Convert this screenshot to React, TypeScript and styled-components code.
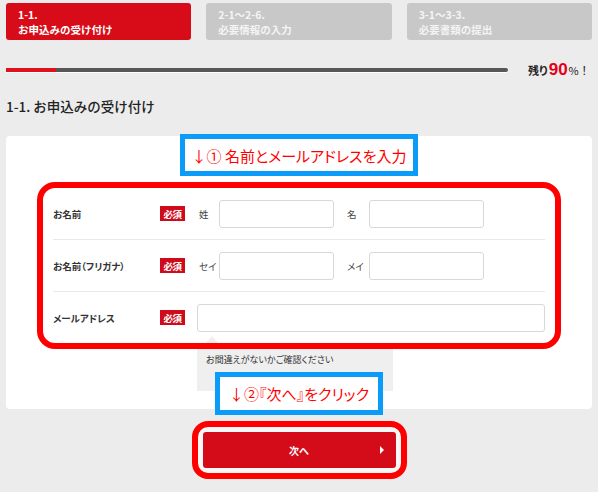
import React from 'react';
import styled, { createGlobalStyle } from 'styled-components';

const GlobalStyle = createGlobalStyle`
  html, body {
    margin: 0;
    padding: 0;
  }
  body {
    background: #ececec;
    font-family: 'Noto Sans CJK JP', 'Noto Sans', sans-serif;
    color: #333;
    width: 598px;
    height: 492px;
    overflow: hidden;
  }
`;

const Page = styled.div`
  padding: 3px 6px 0;
`;

const Steps = styled.div`
  display: grid;
  grid-template-columns: repeat(3, 1fr);
  gap: 15px;
`;

const Step = styled.div<{ active?: boolean }>`
  height: 37px;
  box-sizing: border-box;
  padding: 4px 12px 0;
  border-radius: 3px;
  background: ${({ active }) => (active ? '#d80c18' : '#c8c8c8')};
  color: ${({ active }) => (active ? '#fff' : '#f4f4f4')};
  font-size: 10.5px;
  font-weight: bold;
  line-height: 15px;
  white-space: nowrap;
`;

const ProgressRow = styled.div`
  display: flex;
  align-items: center;
  height: 20px;
  margin-top: 20px;
`;

const Track = styled.div`
  width: 502px;
  height: 4px;
  background: #575757;
  border-radius: 0 2px 2px 0;
  box-shadow: 0 1px 0 #fff;
  overflow: hidden;
`;

const Fill = styled.div`
  height: 100%;
  background: #e0101c;
`;

const Remain = styled.div`
  margin-left: 20px;
  font-size: 11px;
  color: #222;
  display: flex;
  align-items: baseline;
  b {
    font-weight: bold;
    font-feature-settings: 'palt';
  }
`;

const Percent = styled.span`
  font-size: 17px;
  font-weight: bold;
  color: #e5001a;
  font-family: 'Liberation Sans', 'Noto Sans', sans-serif;
  margin: 0 1px;
`;

const Heading = styled.h2`
  margin: 16px 0 0;
  font-size: 13.5px;
  line-height: 20px;
  font-weight: 500;
  color: #222;
`;

const Card = styled.div`
  position: relative;
  margin-top: 20px;
  background: #fff;
  border-radius: 4px;
  padding: 46px 31px 18px;
`;

const Note = styled.div<{ top?: number; bottom?: number; w: number; h: number; size: number }>`
  position: absolute;
  left: 50%;
  transform: translateX(-50%);
  ${({ top }) => (top !== undefined ? `top: ${top}px;` : '')}
  ${({ bottom }) => (bottom !== undefined ? `bottom: ${bottom}px;` : '')}
  width: ${({ w }) => w}px;
  height: ${({ h }) => h}px;
  box-sizing: border-box;
  border: 5px solid #0a9cf8;
  background: #fff;
  color: #ff0000;
  font-size: ${({ size }) => size}px;
  font-feature-settings: 'palt';
  display: flex;
  align-items: center;
  justify-content: center;
  white-space: nowrap;
  z-index: 2;
`;

const Highlight = styled.div`
  position: relative;
  z-index: 1;
  border: 6px solid #ff0000;
  border-radius: 18px;
  padding: 0 10px;
`;

const Row = styled.div<{ last?: boolean }>`
  display: flex;
  align-items: center;
  height: 51px;
  border-bottom: ${({ last }) => (last ? 'none' : '1px solid #e8e8e8')};
`;

const Label = styled.div`
  width: 107px;
  font-size: 9.5px;
  font-weight: bold;
  color: #333;
  font-feature-settings: 'palt';
`;

const Badge = styled.span<{ gap: number }>`
  width: 25px;
  height: 15px;
  margin-right: ${({ gap }) => gap}px;
  background: #cf0a1b;
  color: #fff;
  font-size: 9.5px;
  font-weight: bold;
  letter-spacing: -0.5px;
  display: flex;
  align-items: center;
  justify-content: center;
  flex-shrink: 0;
`;

const SubLabel = styled.span<{ w: number; ml?: number }>`
  width: ${({ w }) => w}px;
  margin-left: ${({ ml }) => ml || 0}px;
  font-size: 9.5px;
  color: #444;
  font-feature-settings: 'palt';
`;

const Input = styled.input<{ grow?: boolean }>`
  box-sizing: border-box;
  height: 28px;
  width: ${({ grow }) => (grow ? 'auto' : '115px')};
  flex: ${({ grow }) => (grow ? '1' : 'none')};
  border: 1px solid #d8d8d8;
  border-radius: 3px;
  background: #fff;
  outline: none;
`;

const Tooltip = styled.div`
  position: relative;
  margin: -5px 0 0 160px;
  width: 196px;
  height: 47px;
  box-sizing: border-box;
  padding: 9px 9px 0;
  background: #efefef;
  font-size: 9px;
  line-height: 13px;
  color: #333;
  font-feature-settings: 'palt';
  &::before {
    content: '';
    position: absolute;
    top: -8px;
    left: 8px;
    border-left: 7px solid transparent;
    border-right: 7px solid transparent;
    border-bottom: 8px solid #efefef;
  }
`;

const NextArea = styled.div`
  display: flex;
  justify-content: center;
  margin-top: 12px;
`;

const NextHighlight = styled.div`
  border: 6px solid #ff0000;
  border-radius: 16px;
  padding: 5px;
  background: #f8f8f8;
`;

const NextButton = styled.button`
  position: relative;
  width: 193px;
  height: 36px;
  border: none;
  border-radius: 3px;
  background: #d40c19;
  color: #fff;
  font-family: inherit;
  font-size: 10px;
  font-weight: bold;
  display: block;
  &::after {
    content: '';
    position: absolute;
    right: 12px;
    top: 50%;
    margin-top: -4px;
    border-top: 4px solid transparent;
    border-bottom: 4px solid transparent;
    border-left: 4px solid #fff;
  }
`;

const App: React.FC = () => {
  const progress = 10;
  return (
    <>
      <GlobalStyle />
      <Page>
        <Steps>
          <Step active>
            1-1.
            <br />
            お申込みの受け付け
          </Step>
          <Step>
            2-1～2-6.
            <br />
            必要情報の入力
          </Step>
          <Step>
            3-1～3-3.
            <br />
            必要書類の提出
          </Step>
        </Steps>

        <ProgressRow>
          <Track>
            <Fill style={{ width: `${progress}%` }} />
          </Track>
          <Remain>
            <b>残り</b>
            <Percent>90</Percent>%！
          </Remain>
        </ProgressRow>

        <Heading>1-1. お申込みの受け付け</Heading>

        <Card>
          <Note top={-2} w={238} h={42} size={15}>
            ↓① 名前とメールアドレスを入力
          </Note>
          <Highlight>
            <Row>
              <Label>お名前</Label>
              <Badge gap={14}>必須</Badge>
              <SubLabel w={20}>姓</SubLabel>
              <Input />
              <SubLabel w={22} ml={13}>
                名
              </SubLabel>
              <Input />
            </Row>
            <Row>
              <Label>お名前（フリガナ）</Label>
              <Badge gap={14}>必須</Badge>
              <SubLabel w={20}>セイ</SubLabel>
              <Input />
              <SubLabel w={22} ml={13}>
                メイ
              </SubLabel>
              <Input />
            </Row>
            <Row last>
              <Label>メールアドレス</Label>
              <Badge gap={12}>必須</Badge>
              <Input grow />
            </Row>
          </Highlight>
          <Tooltip>お間違えがないかご確認ください</Tooltip>
          <Note bottom={-6} w={168} h={43} size={15}>
            ↓②『次へ』をクリック
          </Note>
        </Card>

        <NextArea>
          <NextHighlight>
            <NextButton>次へ</NextButton>
          </NextHighlight>
        </NextArea>
      </Page>
    </>
  );
};

export default App;
